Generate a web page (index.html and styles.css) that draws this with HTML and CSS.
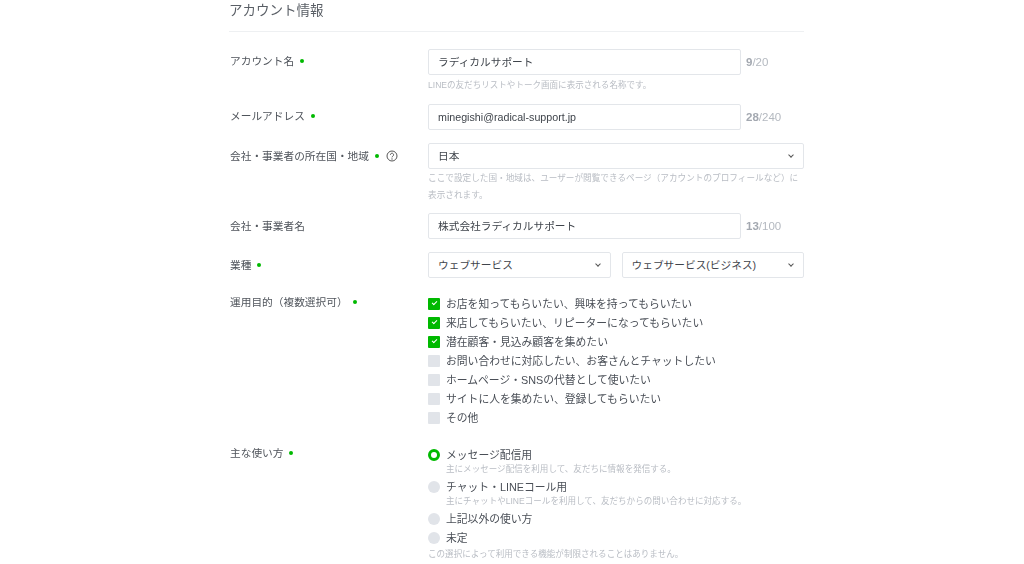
FILE: index.html
```html
<!DOCTYPE html>
<html lang="ja">
<head>
    <meta charset="UTF-8">
    <meta name="viewport" content="width=device-width, initial-scale=1.0">
    <title>アカウント情報</title>
    <link rel="stylesheet" href="styles.css">
</head>
<body>
    <div class="page">
        <h1 class="title">アカウント情報</h1>

        <div class="row row-name">
            <div class="label">アカウント名<span class="dot"></span></div>
            <div class="field">
                <div class="input-line">
                    <div class="input">ラディカルサポート</div>
                    <div class="count"><b>9</b>/20</div>
                </div>
                <p class="hint hint-input">LINEの友だちリストやトーク画面に表示される名称です。</p>
            </div>
        </div>

        <div class="row row-mail">
            <div class="label">メールアドレス<span class="dot"></span></div>
            <div class="field">
                <div class="input-line">
                    <div class="input">minegishi@radical-support.jp</div>
                    <div class="count"><b>28</b>/240</div>
                </div>
            </div>
        </div>

        <div class="row row-country">
            <div class="label">会社・事業者の所在国・地域<span class="dot"></span>
                <svg class="help" viewBox="0 0 12 12" width="12" height="12">
                    <circle cx="6" cy="6" r="5" fill="none" stroke="#555" stroke-width="1"/>
                    <path d="M4.4 4.8a1.6 1.6 0 1 1 2.5 1.3c-.6.4-.9.7-.9 1.3" fill="none" stroke="#555" stroke-width="1"/>
                    <circle cx="6" cy="9" r=".65" fill="#555"/>
                </svg>
            </div>
            <div class="field">
                <div class="select">日本<span class="chevron"></span></div>
                <p class="hint hint-select">ここで設定した国・地域は、ユーザーが閲覧できるページ（アカウントのプロフィールなど）に<br>表示されます。</p>
            </div>
        </div>

        <div class="row row-company">
            <div class="label">会社・事業者名</div>
            <div class="field">
                <div class="input-line">
                    <div class="input">株式会社ラディカルサポート</div>
                    <div class="count"><b>13</b>/100</div>
                </div>
            </div>
        </div>

        <div class="row row-industry">
            <div class="label">業種<span class="dot"></span></div>
            <div class="field select-pair">
                <div class="select">ウェブサービス<span class="chevron"></span></div>
                <div class="select">ウェブサービス(ビジネス)<span class="chevron"></span></div>
            </div>
        </div>

        <div class="row row-purpose">
            <div class="label">運用目的（複数選択可）<span class="dot dot-wide"></span></div>
            <div class="field checks">
                <div class="check on">お店を知ってもらいたい、興味を持ってもらいたい</div>
                <div class="check on">来店してもらいたい、リピーターになってもらいたい</div>
                <div class="check on">潜在顧客・見込み顧客を集めたい</div>
                <div class="check">お問い合わせに対応したい、お客さんとチャットしたい</div>
                <div class="check">ホームページ・SNSの代替として使いたい</div>
                <div class="check">サイトに人を集めたい、登録してもらいたい</div>
                <div class="check">その他</div>
            </div>
        </div>

        <div class="row row-usage">
            <div class="label">主な使い方<span class="dot"></span></div>
            <div class="field radios">
                <div class="radio on">メッセージ配信用</div>
                <p class="hint radio-hint">主にメッセージ配信を利用して、友だちに情報を発信する。</p>
                <div class="radio">チャット・LINEコール用</div>
                <p class="hint radio-hint">主にチャットやLINEコールを利用して、友だちからの問い合わせに対応する。</p>
                <div class="radio">上記以外の使い方</div>
                <div class="radio">未定</div>
                <p class="hint radio-note">この選択によって利用できる機能が制限されることはありません。</p>
            </div>
        </div>
    </div>
</body>
</html>
```

FILE: styles.css
```css
html, body { margin: 0; padding: 0; background: #fff; overflow: hidden; }
body { height: 564px; font-family: "Liberation Sans", "Noto Sans CJK JP", sans-serif; color: #4a4f57; }
p { margin: 0; }

/* 元画像が拡大でぼけているので少しだけ合わせる */
.page { width: 575px; margin-left: 229px; filter: blur(0.35px); }
.title { margin: 0; height: 29px; padding-top: 2px; line-height: 18px; font-size: 13.5px; font-weight: 400; color: #5a5f66; border-bottom: 1px solid #eef0f2; }

.row { display: flex; }
.label { width: 199px; flex: none; font-size: 10.7px; line-height: 16px; color: #4f545b; padding-left: 1px; box-sizing: border-box; }
.field { flex: 1; min-width: 0; }

.row-name { margin-top: 17px; }
.row-name .label { padding-top: 4px; }
.row-mail { margin-top: 12px; }
.row-mail .label { padding-top: 4px; }
.row-country { margin-top: 13px; }
.row-country .label { padding-top: 5px; }
.row-company { margin-top: 11px; }
.row-company .label { padding-top: 5px; }
.row-industry { margin-top: 13px; }
.row-industry .label { padding-top: 5px; }
.row-purpose { margin-top: 17px; }
.row-purpose .label { margin-top: -1px; }
.row-usage { margin-top: 18px; }
.row-usage .label { margin-top: -1px; }

.dot { display: inline-block; width: 4px; height: 4px; border-radius: 50%; background: #00b900; margin-left: 6px; vertical-align: 2px; }
.dot-wide { margin-left: 5px; }
.help { vertical-align: -2px; margin-left: 4px; }

.input-line { display: flex; align-items: center; }
.input, .select { height: 26px; box-sizing: border-box; border: 1px solid #e3e6ea; border-radius: 2px; padding-left: 9px; font-size: 10.7px; line-height: 25px; color: #3f444b; background: #fff; }
.input { width: 313px; flex: none; }
.count { margin-left: 5px; font-size: 11.5px; color: #b4b9c0; }
.count b { font-weight: 700; color: #a3a8b0; }

.select { position: relative; }
.chevron { position: absolute; right: 10px; top: 9px; width: 3px; height: 3px; border-right: 1.2px solid #555; border-bottom: 1.2px solid #555; transform: rotate(45deg); }
.select-pair { display: flex; gap: 11px; }
.select-pair .select { flex: 1; }

.hint { font-size: 8.55px; color: #b9bdc4; }
.hint-input { margin-top: 3px; line-height: 14px; }
.hint-select { margin-top: 1px; line-height: 17px; height: 32px; font-size: 8.65px; }

.check { position: relative; height: 19px; line-height: 18px; padding-left: 18px; font-size: 10.8px; color: #4a4f57; }
.check::before { content: ""; position: absolute; left: 0; top: 3px; width: 12px; height: 12px; border-radius: 1px; background: #e1e4e9; }
.check.on::before { background: #00b900; }
.check.on::after { content: ""; position: absolute; left: 3.5px; top: 6px; width: 4px; height: 2px; border-left: 1.5px solid #fff; border-bottom: 1.5px solid #fff; transform: rotate(-45deg); }

.radio { position: relative; height: 16px; line-height: 18px; padding-left: 18px; font-size: 10.8px; color: #4a4f57; }
.radio::before { content: ""; position: absolute; left: 0; top: 3px; width: 12px; height: 12px; border-radius: 50%; background: #e1e4e9; }
.radio.on::before { box-sizing: border-box; background: #fff; border: 3.5px solid #00b900; }
.radio + .radio { margin-top: 3px; }
.radio-hint { margin-left: 18px; height: 16px; line-height: 14px; }
.radio-note { line-height: 18px; height: 16px; }
```
